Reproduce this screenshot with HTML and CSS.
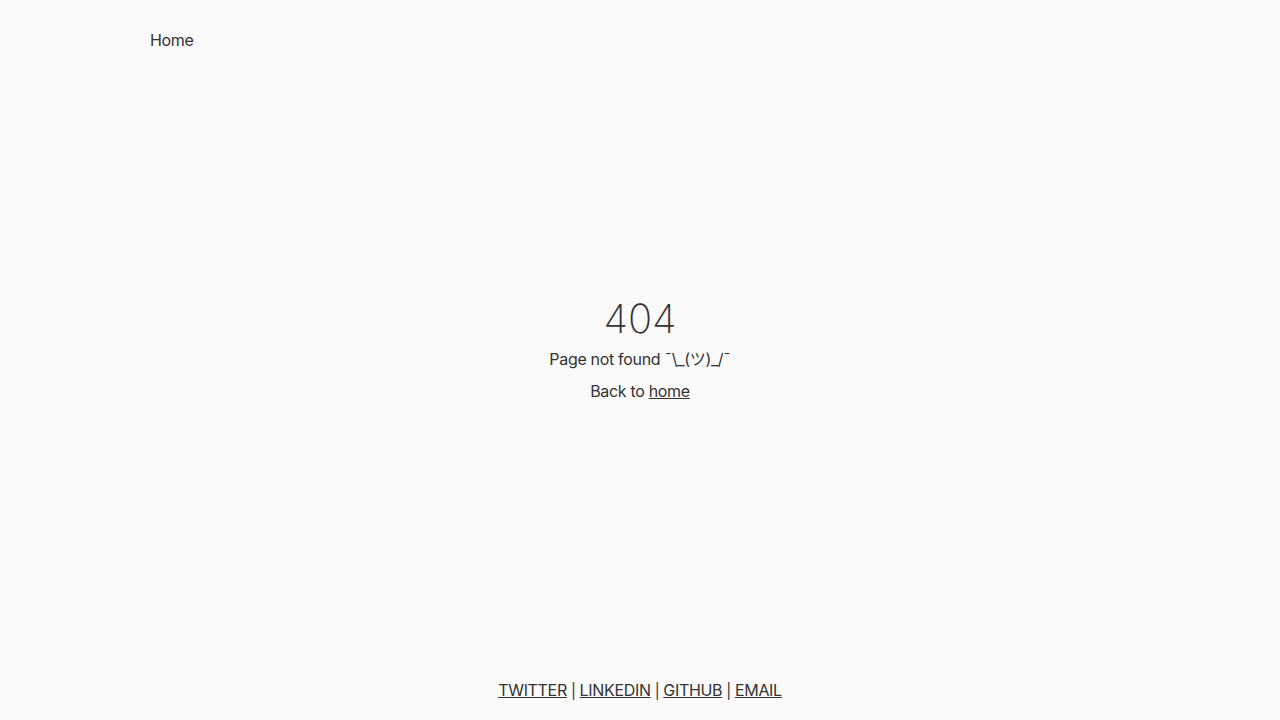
FILE: index.html
```html
<!DOCTYPE html>
<html lang="en">
<head>
<meta charset="utf-8">
<title>404</title>
<link rel="stylesheet" href="styles.css">
</head>
<body>
<div class="page">
  <header class="nav">
    <a class="nav-link" href="#">Home</a>
  </header>
  <main class="main">
    <h1 class="code">404</h1>
    <p class="msg">Page not found ¯\_(ツ)_/¯</p>
    <p class="msg back">Back to <a href="#" class="ulink">home</a></p>
  </main>
  <footer class="footer">
    <a href="#" class="ulink">TWITTER</a><span class="sep">|</span><a href="#" class="ulink">LINKEDIN</a><span class="sep">|</span><a href="#" class="ulink">GITHUB</a><span class="sep">|</span><a href="#" class="ulink">EMAIL</a>
  </footer>
</div>
</body>
</html>
```
FILE: styles.css
```css
html, body {
  margin: 0;
  padding: 0;
  background: #fafafa;
  color: #333333;
  font-family: Inter, "Noto Sans", "Noto Sans CJK JP", sans-serif;
  font-size: 16px;
  line-height: 24px;
  letter-spacing: -0.02em;
}
.page {
  min-height: 100vh;
  display: flex;
  flex-direction: column;
}
.nav {
  padding: 28px 150px 0;
}
.nav-link {
  color: #333333;
  text-decoration: none;
}
.main {
  flex: 1;
  display: flex;
  flex-direction: column;
  align-items: center;
  justify-content: center;
  padding-bottom: 32px;
}
.code {
  margin: 0;
  padding-bottom: 4px;
  font-size: 40px;
  font-weight: 200;
  line-height: 48px;
  letter-spacing: 0;
}
.msg {
  margin: 0;
}
.back {
  margin-top: 8px;
}
.ulink {
  color: #333333;
  text-decoration: underline;
}
.footer {
  text-align: center;
  padding-bottom: 17px;
}
.sep {
  display: inline-block;
  margin: 0 4px;
  font-size: 15px;
}
```
